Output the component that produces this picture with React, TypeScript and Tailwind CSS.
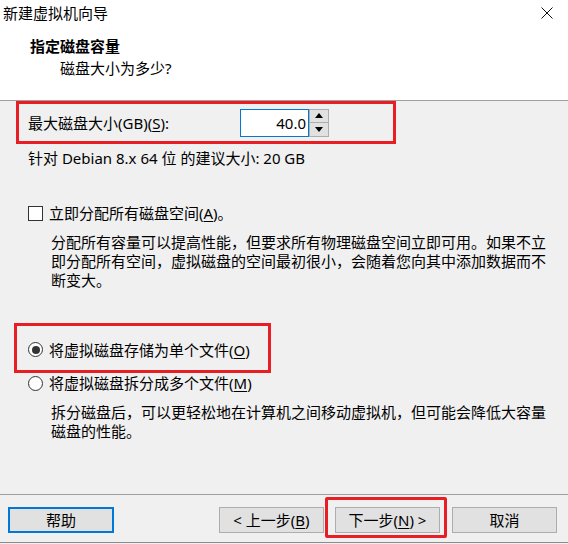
import React from "react";

const U = ({ c }: { c: string }) => <span className="underline underline-offset-2">{c}</span>;

export default function App() {
  return (
    <div
      className="w-[568px] h-[544px] bg-[#f0f0f0] flex flex-col text-black text-[15px] overflow-hidden"
      style={{ fontFamily: '"Noto Sans", "Noto Sans CJK SC", sans-serif' }}
    >
      {/* header */}
      <div className="h-[101px] bg-white border-b border-[#a0a0a0] shrink-0">
        <div className="h-[26px] flex items-center justify-between pl-[3px] pr-[15px]">
          <span className="leading-[20px]">新建虚拟机向导</span>
          <svg width="12" height="12" viewBox="0 0 12 12" className="shrink-0">
            <path d="M0.5 0.5 L11.5 11.5 M11.5 0.5 L0.5 11.5" stroke="#111" strokeWidth="1" fill="none" />
          </svg>
        </div>
        <div className="mt-[10px] pl-[30px] leading-[20px] font-bold">指定磁盘容量</div>
        <div className="mt-[2px] pl-[60px] leading-[20px]">磁盘大小为多少?</div>
      </div>

      {/* max size row (annotated) */}
      <div className="ml-[16px] w-[380px] h-[43px] border-[3px] border-[#e81e25] flex items-center shrink-0">
        <div className="w-[221px] pl-[9px] leading-[20px]">
          最大磁盘大小(GB)(<U c="S" />):
        </div>
        <div className="flex h-[28px]">
          <div className="w-[69px] h-[28px] bg-white border border-[#0078d7] flex items-center justify-end pr-[2px] leading-[20px]">
            40.0
          </div>
          <div className="w-[20px] h-[28px] flex flex-col">
            <div className="h-[14px] bg-[#e1e1e1] border border-[#adadad] flex items-center justify-center">
              <svg width="8" height="5" viewBox="0 0 8 5"><path d="M0 5 L4 0 L8 5 Z" fill="#000" /></svg>
            </div>
            <div className="h-[14px] bg-[#e1e1e1] border border-t-0 border-[#adadad] flex items-center justify-center">
              <svg width="8" height="5" viewBox="0 0 8 5"><path d="M0 0 L8 0 L4 5 Z" fill="#000" /></svg>
            </div>
          </div>
        </div>
      </div>

      <div className="mt-[4px] pl-[28px] leading-[20px]">针对 Debian 8.x 64 位 的建议大小: 20 GB</div>

      {/* allocate now */}
      <div className="mt-[35px] pl-[28px] h-[20px] flex items-center gap-[6px]">
        <div className="w-[15px] h-[15px] bg-white border border-[#333]" />
        <span className="leading-[20px]">
          立即分配所有磁盘空间(<U c="A" />)。
        </span>
      </div>
      <div className="mt-[10px] pl-[51px] leading-[19px]">
        <div>分配所有容量可以提高性能，但要求所有物理磁盘空间立即可用。如果不立</div>
        <div>即分配所有空间，虚拟磁盘的空间最初很小，会随着您向其中添加数据而不</div>
        <div>断变大。</div>
      </div>

      {/* single file (annotated) */}
      <div className="mt-[33px] ml-[14px] w-[257px] h-[50px] border-[3px] border-[#e81e25] pl-[11px] pt-[3px] flex items-center gap-[6px] shrink-0">
        <div className="w-[15px] h-[15px] rounded-full bg-white border border-[#333] flex items-center justify-center">
          <div className="w-[8px] h-[8px] rounded-full bg-[#333]" />
        </div>
        <span className="leading-[20px]">
          将虚拟磁盘存储为单个文件(<U c="O" />)
        </span>
      </div>
      <div className="pl-[28px] h-[20px] flex items-center gap-[6px]">
        <div className="w-[15px] h-[15px] rounded-full bg-white border border-[#333]" />
        <span className="leading-[20px]">
          将虚拟磁盘拆分成多个文件(<U c="M" />)
        </span>
      </div>
      <div className="mt-[10px] pl-[51px] leading-[19px]">
        <div>拆分磁盘后，可以更轻松地在计算机之间移动虚拟机，但可能会降低大容量</div>
        <div>磁盘的性能。</div>
      </div>

      {/* footer */}
      <div className="mt-auto h-[50px] border-t border-[#a0a0a0] shrink-0 flex flex-col">
        <div className="flex items-start pt-[12px] pl-[8px]">
          <button className="w-[106px] h-[26px] bg-[#e1e1e1] border-2 border-[#0078d7] flex items-center justify-center leading-[20px]">
            帮助
          </button>
          <button className="ml-[105px] w-[105px] h-[26px] bg-[#e1e1e1] border border-[#adadad] flex items-center justify-center leading-[20px]">
            &lt; 上一步(<U c="B" />)
          </button>
          <button className="relative ml-[11px] w-[105px] h-[26px] bg-[#e1e1e1] border border-[#adadad] flex items-center justify-center leading-[20px]">
            下一步(<U c="N" />) &gt;
            <span className="absolute -left-[11px] -top-[11px] -right-[8px] -bottom-[6px] border-[3px] border-[#e81e25] rounded-[2px] pointer-events-none" />
          </button>
          <button className="ml-[12px] w-[105px] h-[26px] bg-[#e1e1e1] border border-[#adadad] flex items-center justify-center leading-[20px]">
            取消
          </button>
        </div>
        <div className="mt-auto h-[2px] border-t border-[#8c8c8c] bg-[#f0f0f0]" />
      </div>
    </div>
  );
}
